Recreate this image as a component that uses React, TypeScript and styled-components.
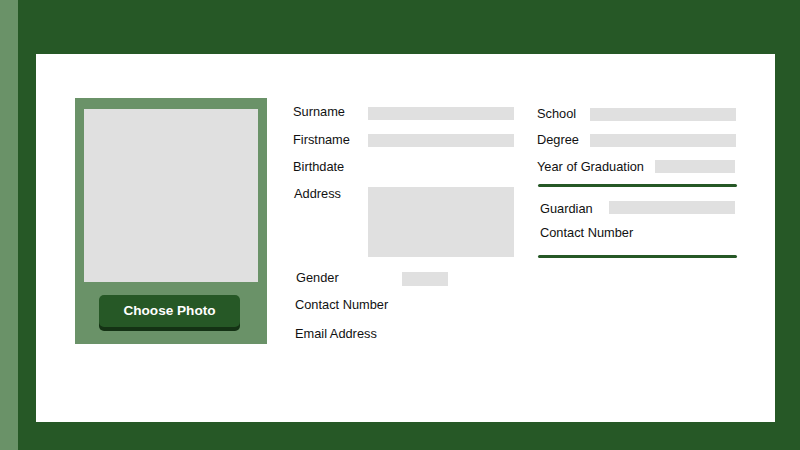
import React from "react";
import styled, { createGlobalStyle } from "styled-components";

const GlobalStyle = createGlobalStyle`
  html, body { margin: 0; padding: 0; }
  body {
    width: 800px;
    height: 450px;
    overflow: hidden;
    font-family: "Liberation Sans", Arial, sans-serif;
    background: #265826;
  }
`;

const Page = styled.div`
  display: flex;
  width: 800px;
  height: 450px;
`;

const SideStrip = styled.div`
  width: 18px;
  flex: none;
  background: #6a9268;
`;

const Main = styled.div`
  flex: 1;
  background: #265826;
  padding: 54px 25px 28px 18px;
  box-sizing: border-box;
  display: flex;
`;

const Card = styled.div`
  flex: 1;
  background: #ffffff;
  display: flex;
  align-items: flex-start;
  padding: 44px 0 0 39px;
  box-sizing: border-box;
`;

const PhotoPanel = styled.div`
  width: 192px;
  height: 246px;
  background: #6a9268;
  box-sizing: border-box;
  padding: 11px 9px 0;
  display: flex;
  flex-direction: column;
  align-items: flex-start;
  flex: none;
`;

const PhotoBox = styled.div`
  width: 174px;
  height: 173px;
  background: #e0e0e0;
`;

const ChooseButton = styled.button`
  margin: 13px 0 0 15px;
  width: 141px;
  height: 32px;
  border: none;
  border-radius: 5px;
  background: #265826;
  box-shadow: 0 4px 0 #143214;
  color: #ffffff;
  font-family: "Liberation Sans", Arial, sans-serif;
  font-weight: bold;
  font-size: 13.6px;
  line-height: 15px;
  padding: 0 0 2px;
  cursor: pointer;
`;

const Column = styled.div<{ $ml: number; $mt: number; $w: number }>`
  display: flex;
  flex-direction: column;
  margin-left: ${(p) => p.$ml}px;
  margin-top: ${(p) => p.$mt}px;
  width: ${(p) => p.$w}px;
  flex: none;
`;

const Row = styled.div<{ $h: number; $indent?: number }>`
  display: flex;
  align-items: flex-start;
  height: ${(p) => p.$h}px;
  padding-left: ${(p) => p.$indent ?? 0}px;
`;

const Label = styled.span<{ $w: number }>`
  width: ${(p) => p.$w}px;
  flex: none;
  font-size: 12.8px;
  line-height: 15px;
  color: #111111;
  white-space: nowrap;
`;

const Bar = styled.div<{ $w: number; $h?: number; $top?: number }>`
  width: ${(p) => p.$w}px;
  height: ${(p) => p.$h ?? 13}px;
  margin-top: ${(p) => p.$top ?? 0}px;
  background: #e0e0e0;
  flex: none;
`;

const Divider = styled.div<{ $mb?: number }>`
  height: 3px;
  width: 199px;
  margin-left: 1px;
  margin-bottom: ${(p) => p.$mb ?? 0}px;
  border-radius: 2px;
  background: #265826;
`;

export default function App() {
  return (
    <>
      <GlobalStyle />
      <Page>
        <SideStrip />
        <Main>
          <Card>
            <PhotoPanel>
              <PhotoBox />
              <ChooseButton>Choose Photo</ChooseButton>
            </PhotoPanel>

            <Column $ml={26} $mt={6} $w={221}>
              <Row $h={28}>
                <Label $w={75}>Surname</Label>
                <Bar $w={146} $top={3} />
              </Row>
              <Row $h={27}>
                <Label $w={75}>Firstname</Label>
                <Bar $w={146} $top={2} />
              </Row>
              <Row $h={27}>
                <Label $w={75}>Birthdate</Label>
              </Row>
              <Row $h={84} $indent={1}>
                <Label $w={74}>Address</Label>
                <Bar $w={146} $h={70} $top={1} />
              </Row>
              <Row $h={27} $indent={3}>
                <Label $w={106}>Gender</Label>
                <Bar $w={46} $h={14} $top={2} />
              </Row>
              <Row $h={29} $indent={2}>
                <Label $w={120}>Contact Number</Label>
              </Row>
              <Row $h={16} $indent={2}>
                <Label $w={120}>Email Address</Label>
              </Row>
            </Column>

            <Column $ml={23} $mt={8} $w={201}>
              <Row $h={26}>
                <Label $w={53}>School</Label>
                <Bar $w={146} $top={2} />
              </Row>
              <Row $h={27}>
                <Label $w={53}>Degree</Label>
                <Bar $w={146} $top={2} />
              </Row>
              <Row $h={25}>
                <Label $w={118}>Year of Graduation</Label>
                <Bar $w={80} $top={1} />
              </Row>
              <Divider $mb={14} />
              <Row $h={24} $indent={3}>
                <Label $w={69}>Guardian</Label>
                <Bar $w={126} $top={0} />
              </Row>
              <Row $h={30} $indent={3}>
                <Label $w={120}>Contact Number</Label>
              </Row>
              <Divider />
            </Column>
          </Card>
        </Main>
      </Page>
    </>
  );
}
